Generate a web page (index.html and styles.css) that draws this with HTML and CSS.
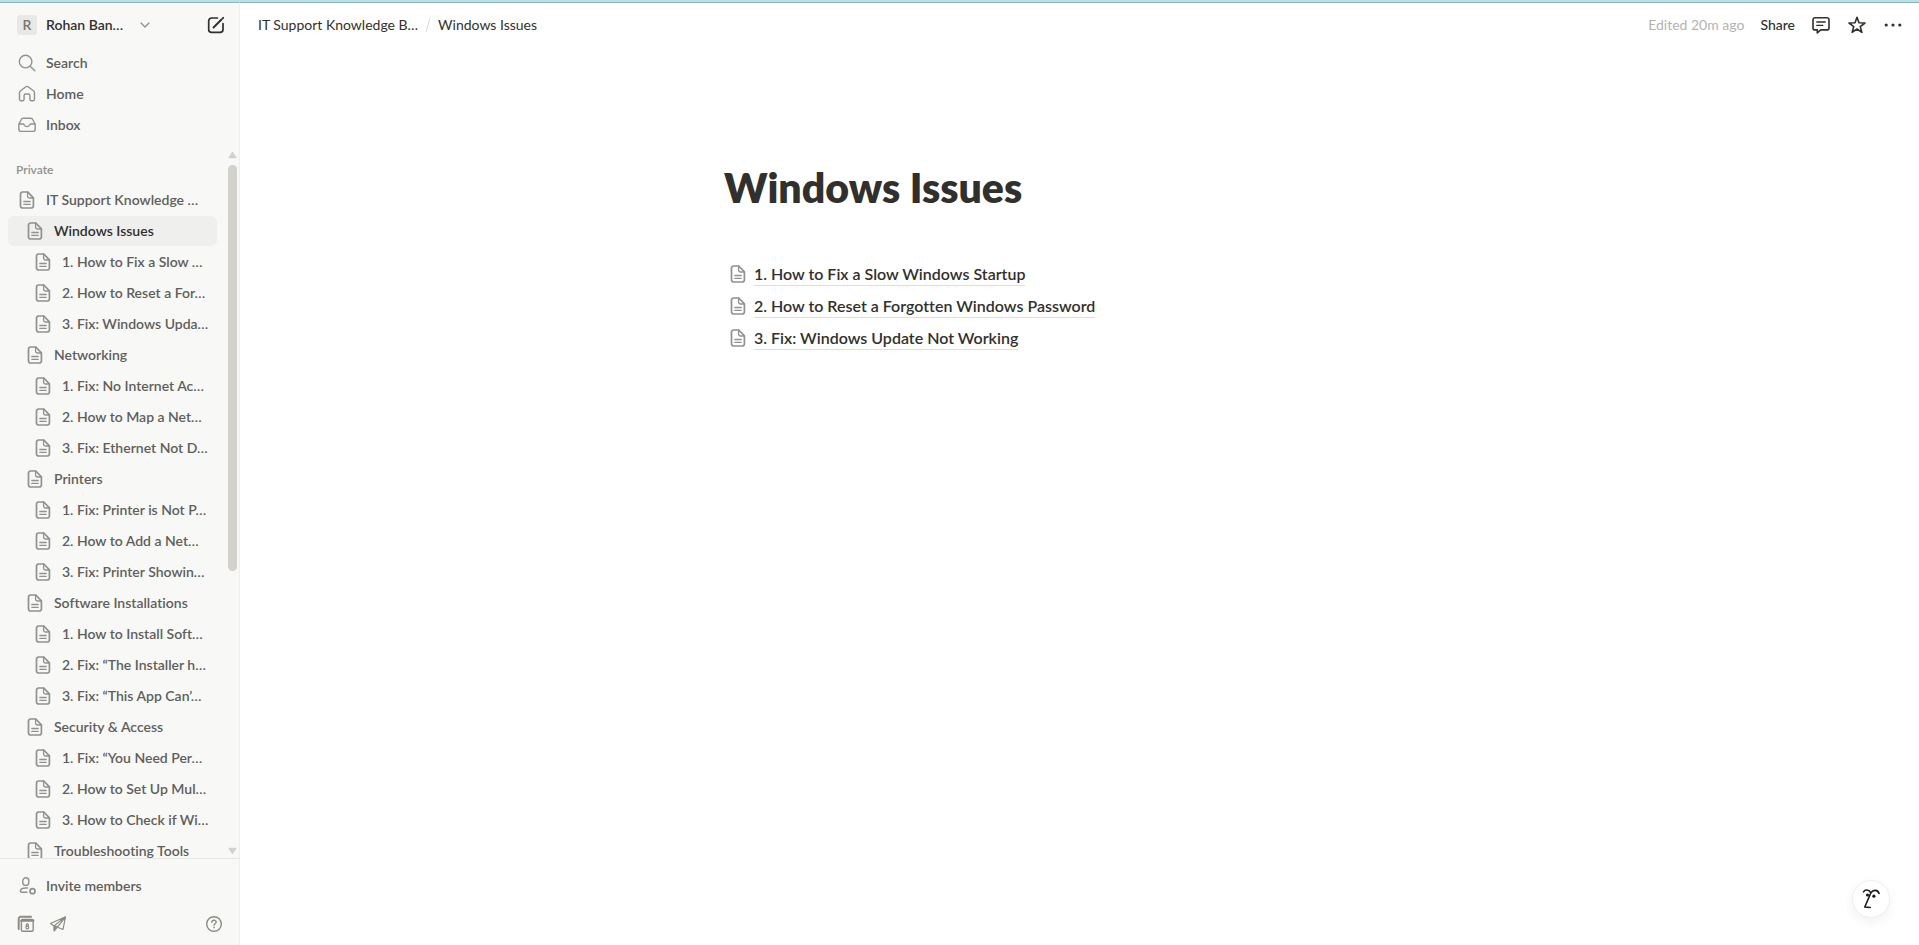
FILE: index.html
```html
<!DOCTYPE html>
<html lang="en">
<head>
<meta charset="utf-8">
<title>Windows Issues</title>
<link rel="stylesheet" href="styles.css">
</head>
<body>
<svg class="sprite" aria-hidden="true">
  <symbol id="doc" viewBox="0 0 16 18">
    <path d="M3.600 1h5.200L14.400 6.800V14.900a2.100 2.100 0 0 1-2.100 2.100H3.600a2.100 2.100 0 0 1-2.100-2.100V3.100A2.100 2.100 0 0 1 3.600 1z" stroke-width="1.700"/>
    <path d="M8.600 1v4.200a1.800 1.800 0 0 0 1.800 1.800h4M4.800 10.500h6.400M4.800 13.300h6.400" stroke-width="1.300"/>
  </symbol>
</svg>
<div class="app">
  <aside class="sidebar">
    <div class="workspace">
      <button class="switcher"><span class="avatar">R</span><span class="name">Rohan Ban…</span>
        <svg class="chevron" viewBox="0 0 10 6"><path d="M1 1l4 4 4-4" stroke-width="1.200"/></svg>
      </button>
      <button class="compose" aria-label="New page"><svg viewBox="0 0 18 18"><path d="M10.500 2H4.600A2.900 2.900 0 0 0 1.700 4.900v8.500a2.900 2.900 0 0 0 2.900 2.900h8.500a2.900 2.900 0 0 0 2.900-2.900V7.500" stroke-width="1.700"/><path d="M6.500 11.500l8-8M15.700 2.300l.5-.5" stroke-width="1.900"/></svg></button>
    </div>
    <nav class="primary">
      <a class="row" href="#"><svg viewBox="0 0 18 18"><circle cx="7.600" cy="7.600" r="6.300"/><path d="M12.200 12.200l4.600 4.600"/></svg>Search</a>
      <a class="row" href="#"><svg viewBox="0 0 18 18"><path d="M1.500 14.300V7.600a2 2 0 0 1 .8-1.600L7.900 1.800a1.800 1.800 0 0 1 2.200 0L15.700 6a2 2 0 0 1 .8 1.600v6.700a1.500 1.500 0 0 1-1.500 1.500h-1.600a1.500 1.500 0 0 1-1.500-1.500V10.500A1.500 1.500 0 0 0 10.400 9H7.600a1.500 1.500 0 0 0-1.500 1.500v3.800a1.500 1.500 0 0 1-1.500 1.500H3a1.500 1.500 0 0 1-1.500-1.500z"/></svg>Home</a>
      <a class="row" href="#"><svg viewBox="0 0 18 18"><path d="M.8 8.300l2.500-4.800a2 2 0 0 1 1.800-1.200h7.800a2 2 0 0 1 1.800 1.200l2.500 4.800v4.900a2.200 2.200 0 0 1-2.200 2.200H3a2.200 2.200 0 0 1-2.200-2.200zM1 8h4.400c.8 0 .8 2.600 3.600 2.600S11.800 8 12.600 8H17"/></svg>Inbox</a>
    </nav>
    <div class="pages">
      <nav class="tree">
        <h2>Private</h2>
        <a class="row" href="#"><svg><use href="#doc"/></svg>IT Support Knowledge …</a>
        <a class="row l2 current" href="#"><svg><use href="#doc"/></svg>Windows Issues</a>
        <a class="row l3" href="#"><svg><use href="#doc"/></svg>1. How to Fix a Slow …</a>
        <a class="row l3" href="#"><svg><use href="#doc"/></svg>2. How to Reset a For…</a>
        <a class="row l3" href="#"><svg><use href="#doc"/></svg>3. Fix: Windows Upda…</a>
        <a class="row l2" href="#"><svg><use href="#doc"/></svg>Networking</a>
        <a class="row l3" href="#"><svg><use href="#doc"/></svg>1. Fix: No Internet Ac…</a>
        <a class="row l3" href="#"><svg><use href="#doc"/></svg>2. How to Map a Net…</a>
        <a class="row l3" href="#"><svg><use href="#doc"/></svg>3. Fix: Ethernet Not D…</a>
        <a class="row l2" href="#"><svg><use href="#doc"/></svg>Printers</a>
        <a class="row l3" href="#"><svg><use href="#doc"/></svg>1. Fix: Printer is Not P…</a>
        <a class="row l3" href="#"><svg><use href="#doc"/></svg>2. How to Add a Net…</a>
        <a class="row l3" href="#"><svg><use href="#doc"/></svg>3. Fix: Printer Showin…</a>
        <a class="row l2" href="#"><svg><use href="#doc"/></svg>Software Installations</a>
        <a class="row l3" href="#"><svg><use href="#doc"/></svg>1. How to Install Soft…</a>
        <a class="row l3" href="#"><svg><use href="#doc"/></svg>2. Fix: “The Installer h…</a>
        <a class="row l3" href="#"><svg><use href="#doc"/></svg>3. Fix: “This App Can’…</a>
        <a class="row l2" href="#"><svg><use href="#doc"/></svg>Security &amp; Access</a>
        <a class="row l3" href="#"><svg><use href="#doc"/></svg>1. Fix: “You Need Per…</a>
        <a class="row l3" href="#"><svg><use href="#doc"/></svg>2. How to Set Up Mul…</a>
        <a class="row l3" href="#"><svg><use href="#doc"/></svg>3. How to Check if Wi…</a>
        <a class="row l2" href="#"><svg><use href="#doc"/></svg>Troubleshooting Tools</a>
      </nav>
      <div class="scrollbar" aria-hidden="true">
        <svg viewBox="0 0 10 8"><path d="M5 1.200L8.800 6.800H1.200z"/></svg>
        <div class="track"><div class="thumb"></div></div>
        <svg viewBox="0 0 10 8"><path d="M5 6.800L8.800 1.200H1.200z"/></svg>
      </div>
    </div>
    <div class="footer">
      <a class="row invite" href="#"><svg viewBox="0 0 18 18"><rect x="4.800" y=".8" width="6" height="7.600" rx="3"/><path d="M9.500 11H7.800c-3 0-5 1.200-5.400 2.700-.2.900.4 1.500 1.300 1.500H9"/><circle cx="14.500" cy="14.200" r="2.500" stroke-width="1.700"/></svg>Invite members</a>
      <div class="tools">
        <button aria-label="Calendar"><svg viewBox="0 0 18 18"><path d="M1.700 14V3.800A2 2 0 0 1 3.700 1.800H14" stroke-width="2"/><rect x="4.400" y="4.400" width="11.800" height="11.800" rx="1.200"/><path d="M4.400 5.600h11.800" stroke-width="2.400"/><circle cx="10.300" cy="9.900" r="1.100" stroke-width="1.200"/><circle cx="10.300" cy="12.500" r="1.400" stroke-width="1.200"/></svg></button>
        <button aria-label="Mail"><svg viewBox="0 0 18 18"><path d="M16.500 1.800L1.500 8.500l3.600 2.400zM16.500 1.800L14 14.500l-5.500-2.300zM16.500 1.800L5.200 10.900v4.900l3.300-3.600z" stroke-width="1.200"/><path d="M5.200 11v4.800l2.600-4.500z" fill="currentColor" stroke-width="1.200"/></svg></button>
        <button class="help" aria-label="Help"><svg viewBox="0 0 18 18"><circle cx="9" cy="9" r="7.300"/><path d="M6.900 7.300c0-2.800 4.300-2.700 4.300-.2 0 1.600-2.200 1.600-2.200 3.200"/><path d="M9 12.300v.3" stroke-width="1.600"/></svg></button>
      </div>
    </div>
  </aside>
  <main class="main">
    <header class="topbar">
      <nav class="crumbs"><a href="#">IT Support Knowledge B…</a><svg viewBox="0 0 6 16"><path d="M5 1L1 15"/></svg><a href="#">Windows Issues</a></nav>
      <div class="actions">
        <span class="edited">Edited 20m ago</span>
        <button class="share">Share</button>
        <button aria-label="Comments"><svg viewBox="0 0 20 20"><path d="M4 2.700h12a2 2 0 0 1 2 2v8.200a2 2 0 0 1-2 2H9.800L6.300 17.900v-3H4a2 2 0 0 1-2-2V4.700a2 2 0 0 1 2-2z"/><path d="M5.800 7h8.400M5.800 10.400h6" stroke-width="1.400"/></svg></button>
        <button aria-label="Favorite"><svg viewBox="0 0 20 20"><path d="M10 2.200l2 5.600 6 .2-4.800 3.600 1.700 5.800L10 14l-4.900 3.400 1.700-5.800L2 8l6-.2z"/></svg></button>
        <button aria-label="More"><svg viewBox="0 0 20 20"><g fill="currentColor" stroke="none"><circle cx="3.200" cy="10" r="1.600"/><circle cx="10" cy="10" r="1.600"/><circle cx="16.800" cy="10" r="1.600"/></g></svg></button>
      </div>
    </header>
    <article class="content">
      <h1>Windows Issues</h1>
      <ul>
        <li><svg><use href="#doc"/></svg><a href="#">1. How to Fix a Slow Windows Startup</a></li>
        <li><svg><use href="#doc"/></svg><a href="#">2. How to Reset a Forgotten Windows Password</a></li>
        <li><svg><use href="#doc"/></svg><a href="#">3. Fix: Windows Update Not Working</a></li>
      </ul>
    </article>
  </main>
</div>
<button class="assistant" aria-label="Assistant"><svg viewBox="0 0 20 22"><path d="M2.500 3.800C4 1.400 8 1.200 9.900 4.800M18 5.400C16.800 1.600 12.200 1.400 9.900 4.800L3.800 19l5.400.5"/><g fill="currentColor" stroke="none"><circle cx="6.500" cy="7" r="1.600"/><circle cx="12.900" cy="8.200" r="1.600"/></g></svg></button>
</body>
</html>
```
FILE: styles.css
```css
* { box-sizing: border-box; }
body {
  margin: 0;
  font: 500 14px/20px Lato, "Open Sans", sans-serif;
  font-variant-ligatures: none;
  color: #32302c;
  background: #fff;
}
a { color: inherit; text-decoration: none; }
button {
  display: flex;
  align-items: center;
  padding: 0;
  border: 0;
  background: none;
  font: inherit;
  color: inherit;
  cursor: pointer;
}
svg {
  display: block;
  flex: none;
  fill: none;
  stroke: currentColor;
  stroke-width: 1.4;
  stroke-linecap: round;
  stroke-linejoin: round;
}
.sprite { position: absolute; width: 0; height: 0; }
.app {
  display: flex;
  height: 100vh;
  border-top: 2px solid #b7e2e5;
}
.sidebar {
  display: flex;
  flex-direction: column;
  flex: none;
  width: 240px;
  background: #f8f8f7;
  border-top: 1px solid #8fb5bf;
  border-right: 1px solid #eeeeec;
  color: #5f5e5b;
  font-weight: 600;
}
.workspace {
  display: flex;
  align-items: center;
  justify-content: space-between;
  height: 44px;
  margin-bottom: 1px;
  padding: 0 14px 0 17px;
  color: #32302c;
}
.avatar {
  width: 20px;
  height: 20px;
  margin-right: 9px;
  border-radius: 3px;
  background: #e8e8e6;
  color: #777672;
  text-align: center;
}
.chevron { width: 10px; height: 6px; margin-left: 17px; color: #8e8b86; }
.compose svg { width: 18px; height: 18px; }
.primary, .tree { display: flex; flex-direction: column; gap: 1px; }
.primary { padding: 0 8px; }
.row {
  display: flex;
  align-items: center;
  flex: none;
  height: 30px;
  border-radius: 6px;
  white-space: nowrap;
}
.row svg { width: 18px; height: 18px; color: #91918e; }
.primary .row, .footer .row { gap: 10px; padding-left: 10px; }
.pages {
  display: flex;
  flex: 1;
  min-height: 0;
  margin-top: 10px;
}
.tree {
  flex: 1;
  overflow: hidden;
  padding: 6px 0 0 8px;
}
.tree h2 {
  margin: 0;
  padding-left: 8px;
  font-size: 12px;
  line-height: 28px;
  font-weight: 600;
  color: #91918e;
}
.tree .row { gap: 11px; padding-left: 11px; }
.tree .row svg { width: 16px; }
.tree .l2 { padding-left: 19px; }
.tree .l3 { padding-left: 27px; }
.tree .current { background: #efefee; color: #32302c; }
.scrollbar {
  display: flex;
  flex-direction: column;
  width: 22px;
  padding: 1px 2px 3px 11px;
}
.scrollbar svg { width: 9px; height: 8px; fill: #d3d1cb; stroke: #d3d1cb; }
.track { flex: 1; padding: 6px 0; }
.thumb { width: 9px; height: 60%; border-radius: 5px; background: #d3d1cb; }
.footer {
  padding: 12px 8px 11px;
  border-top: 1px solid #e6e6e4;
}
.tools {
  display: flex;
  align-items: center;
  gap: 14px;
  height: 20px;
  margin-top: 13px;
  padding: 0 8px 0 9px;
  color: #8e8b86;
}
.tools svg { width: 18px; height: 18px; }
.help { margin-left: auto; }
.main { flex: 1; min-width: 0; border-top: 1px solid #8fb5bf; }
.topbar {
  display: flex;
  align-items: center;
  justify-content: space-between;
  height: 44px;
  padding: 0 16px 0 18px;
  font-weight: 400;
}
.crumbs, .actions { display: flex; align-items: center; }
.crumbs { gap: 7px; }
.crumbs svg { width: 6px; height: 16px; color: #deddda; stroke-width: 1; }
.actions { gap: 16px; }
.actions svg { width: 20px; height: 20px; stroke-width: 1.6; }
.edited { color: #b4b3b0; }
.share { font-weight: 500; }
.content { max-width: 711px; margin: 0 auto; padding-top: 117px; }
h1 {
  margin: 0;
  font-size: 41px;
  line-height: 48px;
  font-weight: 800;
}
.content ul {
  display: flex;
  flex-direction: column;
  gap: 8px;
  margin: 50px 0 0;
  padding: 0 0 0 6px;
  list-style: none;
}
.content li {
  display: flex;
  align-items: center;
  gap: 8px;
  height: 24px;
  font-size: 16px;
  font-weight: 600;
}
.content li svg { width: 16px; height: 20px; color: #91918e; }
.content li a { line-height: 22px; border-bottom: 1px solid #dededc; }
.assistant {
  position: fixed;
  right: 29px;
  bottom: 27px;
  justify-content: center;
  width: 38px;
  height: 38px;
  border: 1px solid #eeeeee;
  border-radius: 50%;
  background: #fff;
  color: #1a1a1a;
  box-shadow: 0 4px 12px rgba(0, 0, 0, .06);
}
.assistant svg { width: 20px; height: 22px; stroke-width: 1.6; }
```
